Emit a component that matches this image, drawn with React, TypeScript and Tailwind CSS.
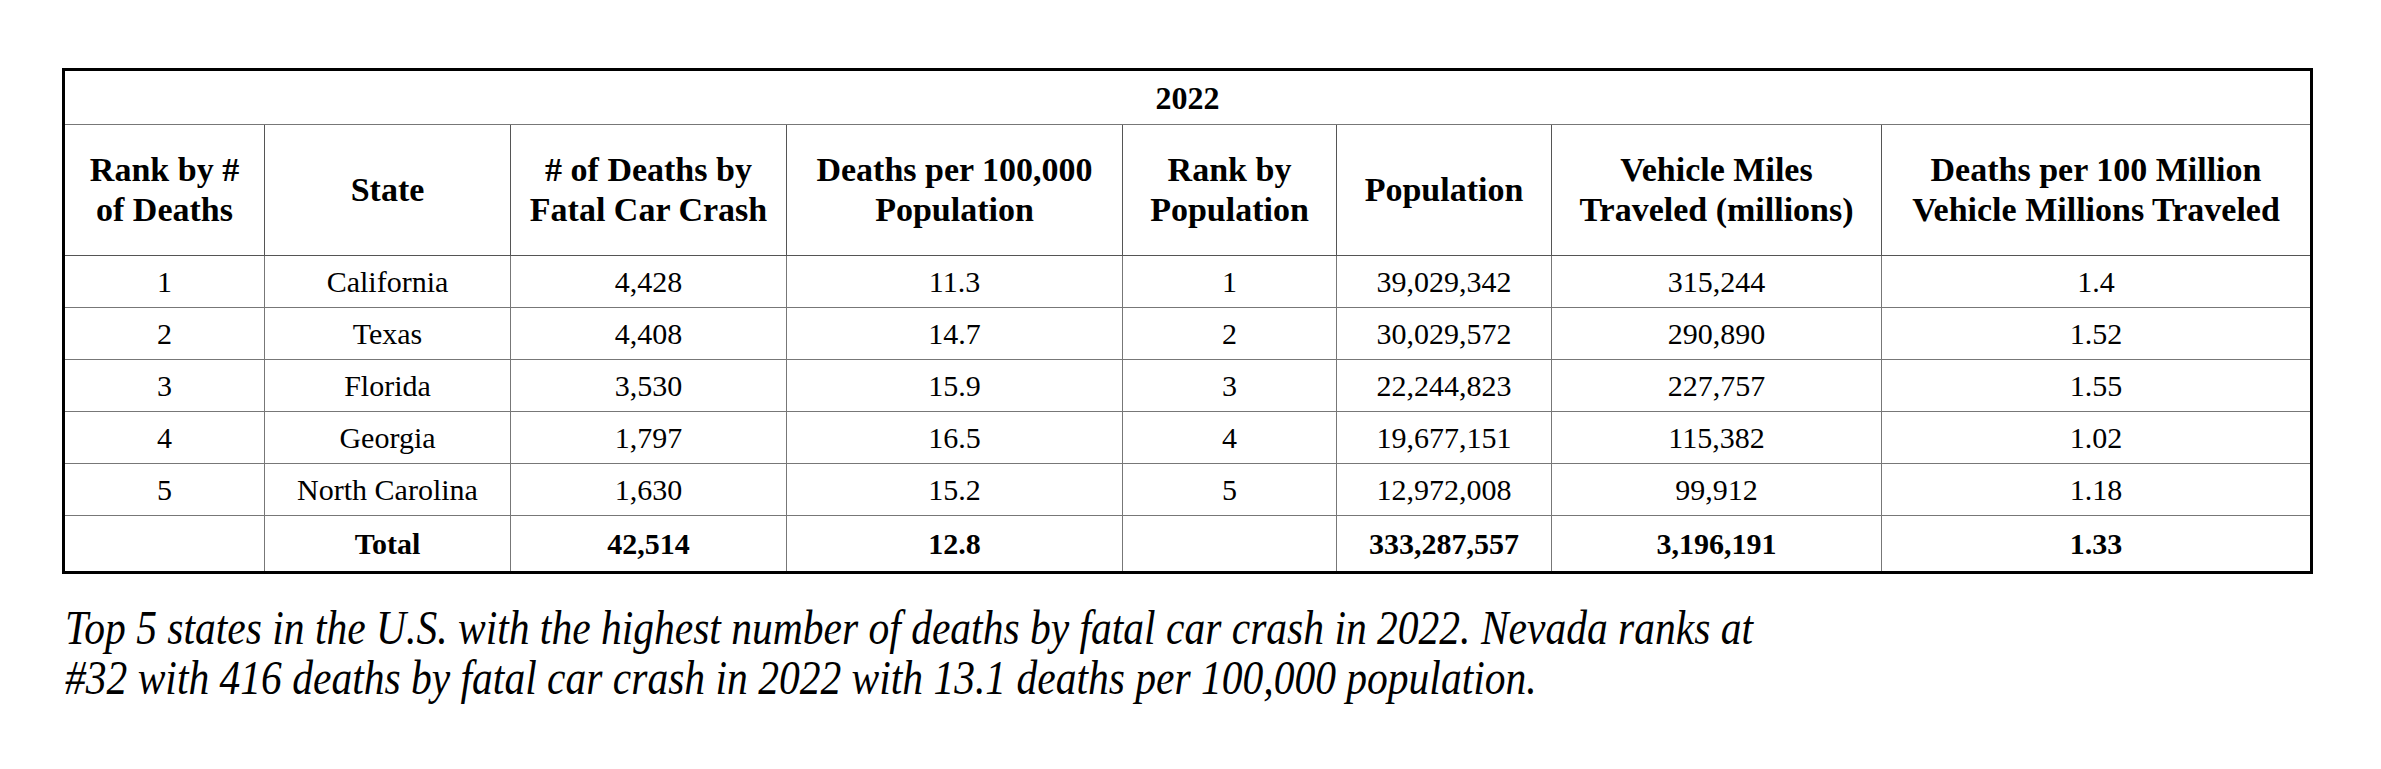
import React from 'react';

type Row = {
  rank: string;
  state: string;
  deaths: string;
  per100k: string;
  popRank: string;
  population: string;
  vmt: string;
  perVmt: string;
};

const rows: Row[] = [
  { rank: '1', state: 'California', deaths: '4,428', per100k: '11.3', popRank: '1', population: '39,029,342', vmt: '315,244', perVmt: '1.4' },
  { rank: '2', state: 'Texas', deaths: '4,408', per100k: '14.7', popRank: '2', population: '30,029,572', vmt: '290,890', perVmt: '1.52' },
  { rank: '3', state: 'Florida', deaths: '3,530', per100k: '15.9', popRank: '3', population: '22,244,823', vmt: '227,757', perVmt: '1.55' },
  { rank: '4', state: 'Georgia', deaths: '1,797', per100k: '16.5', popRank: '4', population: '19,677,151', vmt: '115,382', perVmt: '1.02' },
  { rank: '5', state: 'North Carolina', deaths: '1,630', per100k: '15.2', popRank: '5', population: '12,972,008', vmt: '99,912', perVmt: '1.18' },
];

const th = 'border border-[#555] p-0 text-center align-middle font-bold text-[34px] leading-[40px] whitespace-nowrap';
const td = 'border border-[#777] p-0 text-center align-middle text-[30px] leading-[34px] whitespace-nowrap';

export default function App() {
  return (
    <div className="min-h-screen bg-white text-black pl-[62px] pt-[68px]" style={{ fontFamily: '"Liberation Serif", serif' }}>
      <table className="table-fixed border-collapse border-[3px] border-black w-[2248px]">
        <colgroup>
          <col className="w-[201px]" />
          <col className="w-[246px]" />
          <col className="w-[276px]" />
          <col className="w-[336px]" />
          <col className="w-[214px]" />
          <col className="w-[215px]" />
          <col className="w-[330px]" />
          <col className="w-[430px]" />
        </colgroup>
        <thead>
          <tr className="h-[55px]">
            <th colSpan={8} className="border border-[#777] p-0 text-center align-middle font-bold text-[32px] leading-[36px]">
              2022
            </th>
          </tr>
          <tr className="h-[131px]">
            <th className={th}>Rank by #<br />of Deaths</th>
            <th className={th}>State</th>
            <th className={th}># of Deaths by<br />Fatal Car Crash</th>
            <th className={th}>Deaths per 100,000<br />Population</th>
            <th className={th}>Rank by<br />Population</th>
            <th className={th}>Population</th>
            <th className={th}>Vehicle Miles<br />Traveled (millions)</th>
            <th className={th}>Deaths per 100 Million<br />Vehicle Millions Traveled</th>
          </tr>
        </thead>
        <tbody>
          {rows.map((r) => (
            <tr key={r.rank} className="h-[52px]">
              <td className={td}>{r.rank}</td>
              <td className={td}>{r.state}</td>
              <td className={td}>{r.deaths}</td>
              <td className={td}>{r.per100k}</td>
              <td className={td}>{r.popRank}</td>
              <td className={td}>{r.population}</td>
              <td className={td}>{r.vmt}</td>
              <td className={td}>{r.perVmt}</td>
            </tr>
          ))}
          <tr className="h-[57px] font-bold">
            <td className={td}></td>
            <td className={td}>Total</td>
            <td className={td}>42,514</td>
            <td className={td}>12.8</td>
            <td className={td}></td>
            <td className={td}>333,287,557</td>
            <td className={td}>3,196,191</td>
            <td className={td}>1.33</td>
          </tr>
        </tbody>
      </table>
      <p className="mt-[29px] ml-[3px] origin-left scale-x-[0.865] italic text-[48px] leading-[50px] whitespace-nowrap">
        Top 5 states in the U.S. with the highest number of deaths by fatal car crash in 2022. Nevada ranks at
        <br />
        #32 with 416 deaths by fatal car crash in 2022 with 13.1 deaths per 100,000 population.
      </p>
    </div>
  );
}
